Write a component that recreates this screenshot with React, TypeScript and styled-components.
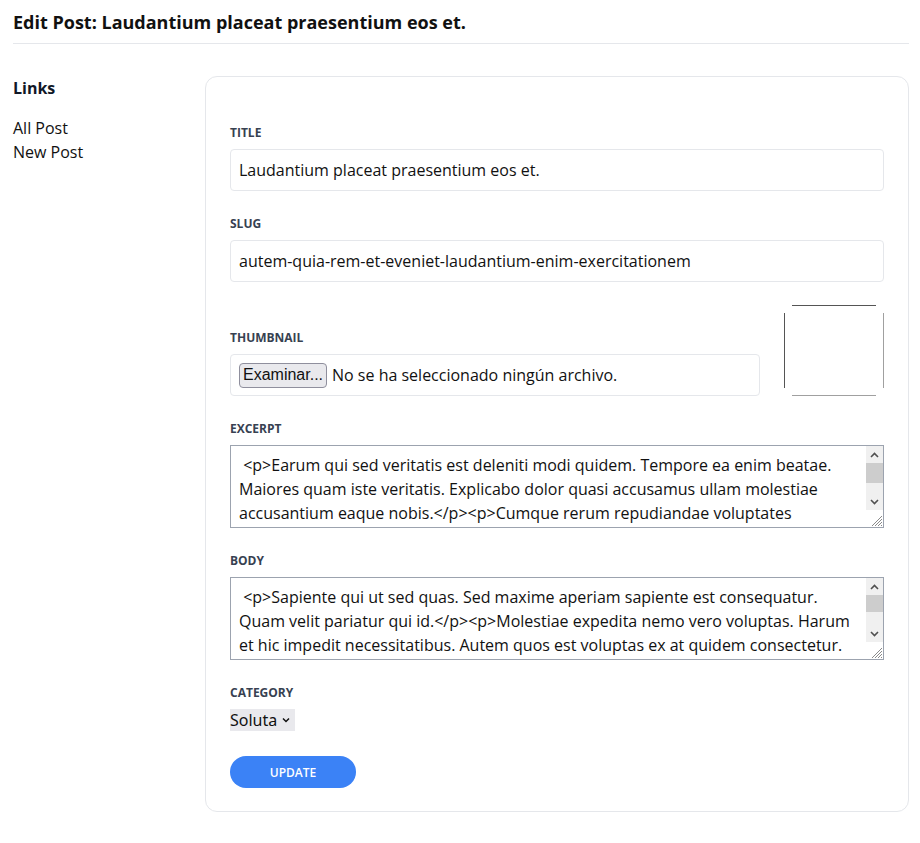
import React from "react";
import styled, { createGlobalStyle } from "styled-components";

const Global = createGlobalStyle`
  html, body { margin: 0; padding: 0; background: #fff; }
  body { font-family: "Open Sans", "Noto Sans", sans-serif; color: #111827; }
  * { box-sizing: border-box; }
`;

const Page = styled.div`
  padding: 0 11px 0 13px;
`;

const Header = styled.header`
  padding: 8px 0 7px;
  border-bottom: 1px solid #e5e7eb;
`;

const PageTitle = styled.h1`
  margin: 0;
  font-size: 18px;
  line-height: 28px;
  font-weight: 700;
  color: #111;
`;

const Main = styled.main`
  display: flex;
  align-items: flex-start;
  margin-top: 32px;
`;

const Sidebar = styled.aside`
  width: 192px;
  flex: none;
`;

const SideTitle = styled.h2`
  margin: 0 0 16px;
  font-size: 16px;
  line-height: 24px;
  font-weight: 700;
`;

const SideLink = styled.a`
  display: block;
  font-size: 16px;
  line-height: 24px;
  color: #111;
  text-decoration: none;
`;

const Card = styled.form`
  flex: 1;
  border: 1px solid #e5e7eb;
  border-radius: 12px;
  padding: 48px 24px 23px;
  display: flex;
  flex-direction: column;
  gap: 25px;
`;

const Field = styled.div`
  display: flex;
  flex-direction: column;
  gap: 8px;
  min-width: 0;
  flex: 1;
`;

const Label = styled.label`
  font-size: 12px;
  line-height: 16px;
  font-weight: 700;
  text-transform: uppercase;
  color: #374151;
`;

const TextInput = styled.input`
  height: 42px;
  width: 100%;
  border: 1px solid #e5e7eb;
  border-radius: 4px;
  padding: 0 8px;
  font-family: inherit;
  font-size: 16px;
  color: #111;
  outline: none;
`;

const ThumbRow = styled.div`
  display: flex;
  align-items: flex-end;
  gap: 24px;
  margin-top: -2px;
`;

const FileBox = styled.div`
  height: 42px;
  border: 1px solid #e5e7eb;
  border-radius: 4px;
  padding: 0 8px;
  display: flex;
  align-items: center;
  gap: 5px;
  font-size: 16px;
`;

const FileButton = styled.button`
  height: 25px;
  padding: 0 3px;
  background: #e9e9ed;
  border: 1px solid #8f8f9d;
  border-radius: 4px;
  font-family: "Liberation Sans", Arial, sans-serif;
  font-size: 16px;
  color: #111;
`;

const FileText = styled.span`
  font-size: 16px;
  color: #111;
`;

const Thumb = styled.div`
  width: 100px;
  height: 91px;
  flex: none;
  background:
    linear-gradient(#555, #555) 8px 0 / calc(100% - 16px) 1px no-repeat,
    linear-gradient(#555, #555) 0 8px / 1px calc(100% - 16px) no-repeat,
    linear-gradient(#a0a0a0, #a0a0a0) 8px 100% / calc(100% - 16px) 1px no-repeat,
    linear-gradient(#a0a0a0, #a0a0a0) 100% 8px / 1px calc(100% - 16px) no-repeat;
`;

const TextBox = styled.div`
  height: 83px;
  border: 1px solid #9ca3af;
  display: flex;
`;

const Area = styled.textarea`
  flex: 1;
  min-width: 0;
  border: none;
  padding: 7px 8px;
  font-family: inherit;
  font-size: 16px;
  line-height: 24px;
  color: #111;
  resize: none;
  overflow: hidden;
  outline: none;
`;

const ScrollBar = styled.div`
  width: 17px;
  flex: none;
  display: flex;
  flex-direction: column;
`;

const ScrollButton = styled.div`
  height: 17px;
  flex: none;
  background: #f0f0f0;
  display: flex;
  align-items: center;
  justify-content: center;
`;

const Track = styled.div`
  flex: 1;
  background: #f0f0f0;
`;

const ScrollThumb = styled.div<{ $size: number }>`
  height: ${(p) => p.$size}px;
  background: #cdcdcd;
`;

const Resizer = styled.div`
  height: 17px;
  flex: none;
  background: #fff;
  display: flex;
  align-items: flex-end;
  justify-content: flex-end;
`;

const SelectWrap = styled.div`
  display: inline-flex;
  align-items: center;
  align-self: flex-start;
  height: 22px;
  background: #e9e9ed;
  padding-right: 4px;
  gap: 3px;
`;

const Select = styled.select`
  appearance: none;
  -webkit-appearance: none;
  border: none;
  background: transparent;
  padding: 0;
  font-family: "Noto Sans", "Open Sans", sans-serif;
  font-size: 16px;
  color: #111;
  outline: none;
`;

const Submit = styled.button`
  align-self: flex-start;
  width: 126px;
  height: 32px;
  border: none;
  border-radius: 999px;
  background: #3b82f6;
  color: #fff;
  font-family: inherit;
  font-size: 12px;
  font-weight: 600;
  text-transform: uppercase;
`;

const excerpt =
  " <p>Earum qui sed veritatis est deleniti modi quidem. Tempore ea enim beatae. Maiores quam iste veritatis. Explicabo dolor quasi accusamus ullam molestiae accusantium eaque nobis.</p><p>Cumque rerum repudiandae voluptates laboriosam. Quia aut exercitationem voluptatem nesciunt. Aut vel rerum consequatur ipsam ut. Et nihil sunt enim ducimus maiores officiis.</p><p>Voluptas et est ut quos qui. Dolorem et quia aliquid velit.</p>";

const body =
  " <p>Sapiente qui ut sed quas. Sed maxime aperiam sapiente est consequatur. Quam velit pariatur qui id.</p><p>Molestiae expedita nemo vero voluptas. Harum et hic impedit necessitatibus. Autem quos est voluptas ex at quidem consectetur. Rerum ut commodi minus debitis qui.</p><p>Dolores sit quas et est. Omnis repellat ut accusantium nihil inventore sit.</p>";

const Chevron = () => (
  <svg width="10" height="10" viewBox="0 0 10 10" fill="none">
    <path d="M2 3.5 L5 6.5 L8 3.5" stroke="#111" strokeWidth="1.5" />
  </svg>
);

const Arrow = ({ up }: { up?: boolean }) => (
  <svg width="9" height="6" viewBox="0 0 9 6" fill="none">
    <path
      d={up ? "M1 5 L4.5 1.5 L8 5" : "M1 1 L4.5 4.5 L8 1"}
      stroke="#505050"
      strokeWidth="1.6"
    />
  </svg>
);

const Grip = () => (
  <svg width="14" height="14" viewBox="0 0 14 14" fill="none">
    <path
      d="M13 3 L3 13 M13 6 L6 13 M13 9 L9 13 M13 12 L12 13"
      stroke="#8a8a8a"
      strokeWidth="1"
    />
  </svg>
);

const ScrollArea = ({ value, thumb }: { value: string; thumb: number }) => (
  <TextBox>
    <Area defaultValue={value} />
    <ScrollBar>
      <ScrollButton>
        <Arrow up />
      </ScrollButton>
      <Track>
        <ScrollThumb $size={thumb} />
      </Track>
      <ScrollButton>
        <Arrow />
      </ScrollButton>
      <Resizer>
        <Grip />
      </Resizer>
    </ScrollBar>
  </TextBox>
);

export default function App() {
  return (
    <Page>
      <Global />
      <Header>
        <PageTitle>Edit Post: Laudantium placeat praesentium eos et.</PageTitle>
      </Header>
      <Main>
        <Sidebar>
          <SideTitle>Links</SideTitle>
          <SideLink href="#">All Post</SideLink>
          <SideLink href="#">New Post</SideLink>
        </Sidebar>
        <Card onSubmit={(e) => e.preventDefault()}>
          <Field>
            <Label>Title</Label>
            <TextInput defaultValue="Laudantium placeat praesentium eos et." />
          </Field>
          <Field>
            <Label>Slug</Label>
            <TextInput defaultValue="autem-quia-rem-et-eveniet-laudantium-enim-exercitationem" />
          </Field>
          <ThumbRow>
            <Field>
              <Label>Thumbnail</Label>
              <FileBox>
                <FileButton type="button">Examinar...</FileButton>
                <FileText>No se ha seleccionado ningún archivo.</FileText>
              </FileBox>
            </Field>
            <Thumb />
          </ThumbRow>
          <Field>
            <Label>Excerpt</Label>
            <ScrollArea value={excerpt} thumb={20} />
          </Field>
          <Field>
            <Label>Body</Label>
            <ScrollArea value={body} thumb={17} />
          </Field>
          <Field>
            <Label>Category</Label>
            <SelectWrap>
              <Select defaultValue="soluta">
                <option value="soluta">Soluta</option>
              </Select>
              <Chevron />
            </SelectWrap>
          </Field>
          <Submit type="submit">Update</Submit>
        </Card>
      </Main>
    </Page>
  );
}
